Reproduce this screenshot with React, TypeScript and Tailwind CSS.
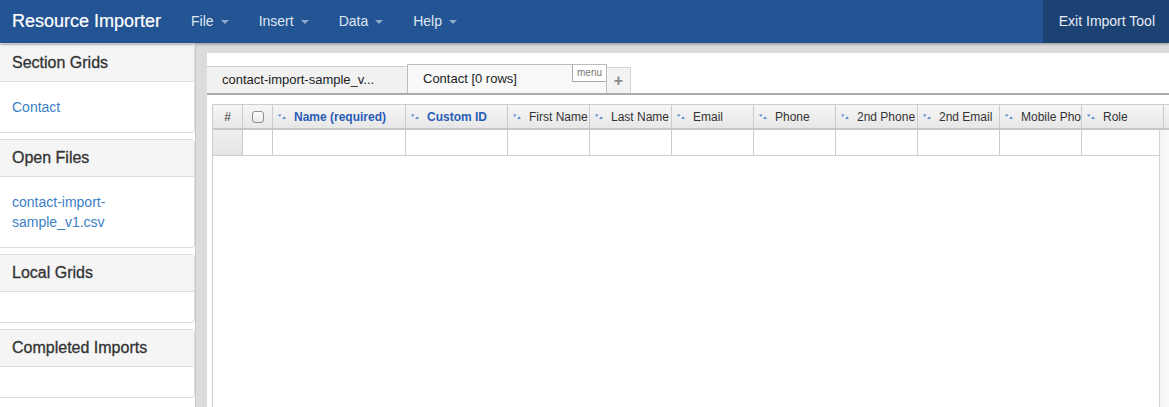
import React from "react";

const Caret = () => (
  <span className="ml-[7px] inline-block w-0 h-0 border-l-[4px] border-r-[4px] border-t-[4px] border-l-transparent border-r-transparent border-t-[#8fa9cc] align-middle" />
);

const SortIcon = () => (
  <svg width="8" height="7" viewBox="0 0 8 7" className="shrink-0">
    <path d="M0 1.5 L3.6 1.5 L1.8 4 Z" fill="#5f8fd6" />
    <path d="M4.2 6 L8 6 L6.1 3.2 Z" fill="#5f8fd6" />
  </svg>
);

type Col = { label: string; w: number; bold?: boolean };
const cols: Col[] = [
  { label: "Name (required)", w: 133, bold: true },
  { label: "Custom ID", w: 102, bold: true },
  { label: "First Name", w: 82 },
  { label: "Last Name", w: 82 },
  { label: "Email", w: 82 },
  { label: "Phone", w: 82 },
  { label: "2nd Phone", w: 82 },
  { label: "2nd Email", w: 82 },
  { label: "Mobile Phone", w: 82 },
  { label: "Role", w: 82 },
];

function Panel({ title, children, bodyClass }: { title: string; children?: React.ReactNode; bodyClass?: string }) {
  return (
    <div className="border border-l-0 border-[#dddddd] rounded-r-[4px] bg-white mb-[6px]">
      <div className="h-[37px] bg-[#f5f5f5] border-b border-[#dddddd] px-[12px] flex items-center text-[16px] text-[#333] [-webkit-text-stroke:0.3px_#333]">
        {title}
      </div>
      <div className={"px-[12px] text-[14px] leading-[20px] text-[#3a7fc6] " + (bodyClass ?? "")}>{children}</div>
    </div>
  );
}

export default function App() {
  return (
    <div className="w-[1169px] h-[407px] overflow-hidden flex flex-col font-['Liberation_Sans',Arial,sans-serif] bg-white">
      {/* Navbar */}
      <div className="h-[43px] shrink-0 bg-[#235493] flex items-stretch text-white relative z-10 shadow-[0_1px_3px_rgba(0,0,0,0.35)]">
        <div className="pl-[12px] pr-[15px] flex items-center text-[18px] [-webkit-text-stroke:0.2px_#fff]">Resource Importer</div>
        {["File", "Insert", "Data", "Help"].map((m) => (
          <div key={m} className="px-[15px] flex items-center text-[14px] text-[#dfe7f1]">
            {m}
            <Caret />
          </div>
        ))}
        <div className="flex-1" />
        <div className="bg-[#1c4274] pl-[16px] pr-[14px] flex items-center text-[14px] text-[#e6ecf4] whitespace-nowrap">Exit Import Tool</div>
      </div>

      <div className="flex flex-1 min-h-0">
        {/* Sidebar */}
        <div className="w-[195px] shrink-0 bg-white pt-[1px]">
          <Panel title="Section Grids" bodyClass="py-[15px]">Contact</Panel>
          <Panel title="Open Files" bodyClass="py-[15px]">
            contact-import-
            <br />
            sample_v1.csv
          </Panel>
          <Panel title="Local Grids" bodyClass="h-[30px]" />
          <Panel title="Completed Imports" bodyClass="h-[30px]" />
        </div>

        {/* Main */}
        <div className="flex-1 min-w-0 bg-[#dcdcdc] border-l border-[#c9c9c9] pt-[10px] pl-[11px] flex">
          <div className="flex-1 bg-white flex flex-col min-w-0">
            {/* Tabs */}
            <div className="pt-[11px] flex items-end border-b-2 border-[#acacac]">
              <div className="w-[200px] h-[27px] bg-[#f1f1f1] border-t border-[#cfcfcf] flex items-center pl-[15px] text-[13px] text-[#222]">
                contact-import-sample_v...
              </div>
              <div className="relative w-[200px] h-[29px] bg-[#f9f9f9] border border-b-0 border-[#bdbdbd] flex items-center pl-[15px] text-[13px] text-[#222]">
                Contact [0 rows]
                <div className="absolute top-0 right-0 w-[34px] h-[17px] bg-white border border-t-0 border-r-0 border-[#a9a9a9] flex items-center justify-center text-[10px] text-[#777] leading-none">
                  menu
                </div>
              </div>
              <div className="w-[24px] h-[26px] bg-[#f3f3f3] border border-l-0 border-b-0 border-[#d2d2d2] flex items-center justify-center text-[16px] font-bold text-[#888] leading-none">
                +
              </div>
            </div>

            {/* Grid */}
            <div className="ml-[5px] mt-[9px] flex-1 flex flex-col border-l border-t border-[#cccccc] min-h-0 overflow-hidden">
              <div className="h-[25px] flex shrink-0 bg-gradient-to-b from-[#f6f6f6] to-[#e7e7e7] border-b-2 border-[#c6c6c6] text-[12px] text-[#333]">
                <div className="w-[30px] shrink-0 border-r border-[#cccccc] flex items-center justify-center">#</div>
                <div className="w-[30px] shrink-0 border-r border-[#cccccc] flex items-center justify-center">
                  <div className="w-[12px] h-[12px] rounded-[3px] border border-[#8e8e8e] bg-gradient-to-b from-white to-[#e9e9e9]" />
                </div>
                {cols.map((c) => (
                  <div
                    key={c.label}
                    style={{ width: c.w }}
                    className={
                      "shrink-0 border-r border-[#cccccc] flex items-center pl-[5px] overflow-hidden whitespace-nowrap " +
                      (c.bold ? "font-bold text-[#2b5cb5]" : "")
                    }
                  >
                    <SortIcon />
                    <span className="ml-[8px]">{c.label}</span>
                  </div>
                ))}
                <div className="w-[82px] shrink-0" />
              </div>
              <div className="flex-1 flex min-h-0">
                <div className="flex-1 min-w-0 overflow-hidden">
                  <div className="h-[26px] flex border-b border-[#cccccc]">
                    <div className="w-[30px] shrink-0 border-r border-[#cccccc] bg-gradient-to-b from-[#f0f0f0] to-[#e4e4e4]" />
                    <div className="w-[30px] shrink-0 border-r border-[#cccccc]" />
                    {cols.map((c) => (
                      <div key={c.label} style={{ width: c.w }} className="shrink-0 border-r border-[#cccccc]" />
                    ))}
                  </div>
                </div>
                <div className="w-[10px] shrink-0 border-l border-[#d4d4d4] bg-gradient-to-r from-[#f3f3f3] to-[#fafafa]" />
              </div>
            </div>
          </div>
        </div>
      </div>
    </div>
  );
}
